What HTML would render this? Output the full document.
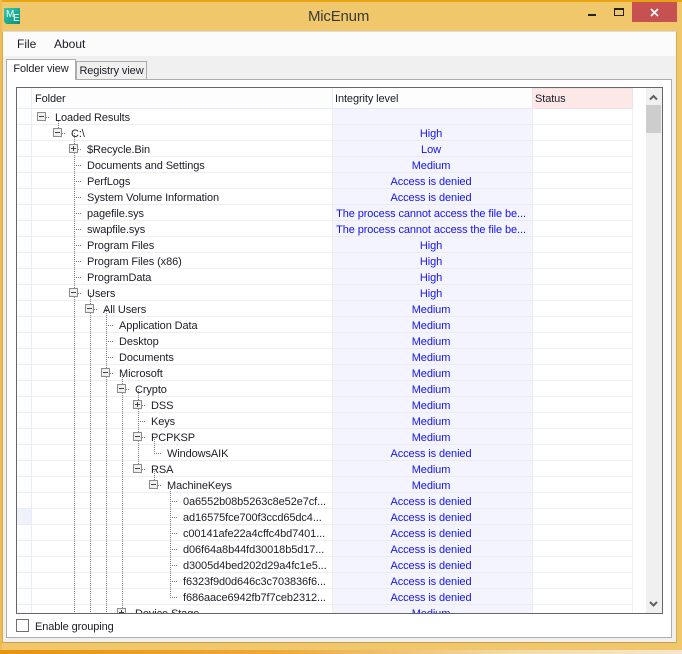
<!DOCTYPE html>
<html><head><meta charset="utf-8"><style>
html,body{margin:0;padding:0}
body{width:682px;height:654px;overflow:hidden;position:relative;background:#f0c76b;font:11px/16px "Liberation Sans",sans-serif;letter-spacing:-.1px;color:#1c1c28}
div,span{position:absolute;box-sizing:border-box;white-space:nowrap}
.r{left:0;width:630px;height:16px;position:relative;display:block}
#rows{left:0;top:21px;width:645px;height:504px;overflow:hidden}
#rows .r{position:absolute}
.h{left:0;top:0;width:15px;height:16px;border-right:1px solid #e6edf8;border-bottom:1px solid #e6edf8;background:#fdfdff}
.f{left:15px;top:0;width:301px;height:16px;border-right:1px solid #efefef;border-bottom:1px solid #efefef}
.i{left:316px;top:0;width:200px;height:16px;background:#f4f4ff;border-right:1px solid #ebebf5;border-bottom:1px solid #ebebf5;color:#1414f0;text-align:center;line-height:18px;padding-right:3px}
.s{left:516px;top:0;width:100px;height:16px;border-right:1px solid #efefef;border-bottom:1px solid #efefef}
.t{top:1px;line-height:16px}
</style></head><body>
<div style="left:0;top:0;width:682px;height:2px;background:#e8a312"></div>
<div style="left:0;top:0;width:2px;height:654px;background:#eebb55"></div>
<div style="left:0;top:650px;width:682px;height:4px;background:linear-gradient(90deg,#e8930c,#eca93a 40%,#f3d9a8 75%,#f6e6cc)"></div>
<div style="left:4px;top:8px;width:16px;height:16px;background:linear-gradient(135deg,#35c9a8,#0a8f7c);clip-path:polygon(0 0,100% 0,100% 100%,15% 100%,0 85%)">
 <span style="left:2px;top:2px;color:#e8fff8;font-size:10px;line-height:10px;letter-spacing:0">M</span>
 <span style="left:9px;top:6px;color:#fff;font-size:10px;line-height:10px;letter-spacing:0">E</span>
</div>
<div style="left:308px;top:8px;font-size:15px;line-height:18px;letter-spacing:-.2px;color:#3a3a3a">MicEnum</div>
<div style="left:588px;top:14px;width:8px;height:2px;background:#222"></div>
<div style="left:614px;top:8px;width:10px;height:8px;border:1px solid #222;border-top-width:2px"></div>
<div style="left:632px;top:2px;width:45px;height:20px;background:#c75050"></div>
<svg style="position:absolute;left:650px;top:8px" width="9" height="9"><path d="M1 1L8 8M8 1L1 8" stroke="#fff" stroke-width="1.7"/></svg>

<div style="left:2px;top:31px;width:675px;height:612px;background:#f0f0f0;border-right:1px solid #d8ad4a;border-bottom:1px solid #c9a04a;border-top:1px solid #ddd;border-left:1px solid #d8ad4a"></div>
<div style="left:3px;top:32px;width:673px;height:24px;background:#fbfbfb"></div>
<div style="left:17px;top:36px;font-size:12px;letter-spacing:0">File</div>
<div style="left:54px;top:36px;font-size:12px;letter-spacing:0">About</div>

<div style="left:76px;top:61px;width:71px;height:19px;background:#f0f0f0;border:1px solid #adadad;text-align:center;line-height:19px">Registry view</div>
<div style="left:6px;top:79px;width:666px;height:559px;background:#fff;border:1px solid #adadad"></div>
<div style="left:6px;top:59px;width:70px;height:21px;background:#fff;border:1px solid #adadad;border-bottom:0;text-align:center;line-height:19px">Folder view</div>

<div style="left:16px;top:87px;width:647px;height:527px;border:1px solid #666;overflow:hidden;background:#fff">
 <div style="left:0;top:0;width:15px;height:21px;background:#fdfdff;border-right:1px solid #e6edf8;border-bottom:1px solid #e6edf8"></div>
 <div style="left:15px;top:0;width:301px;height:21px;background:#fdfdfd;border-right:1px solid #e6edf8;border-bottom:1px solid #e6edf8;padding-left:3px;line-height:23px">Folder</div>
 <div style="left:316px;top:0;width:200px;height:21px;background:#fdfdfd;border-right:1px solid #f0e0e2;border-bottom:1px solid #e6e6f8;padding-left:2px;line-height:23px">Integrity level</div>
 <div style="left:515px;top:0;width:101px;height:21px;background:#fde8e8;border:1px solid #f5dfe5;padding-left:2px;line-height:21px">Status</div>
 <div id="rows">
<div class="r" style="top:0"><div class="h"></div><div class="f"><span class="t" style="left:23px">Loaded Results</span></div><div class="i"></div><div class="s"></div></div>
<div class="r" style="top:16px"><div class="h"></div><div class="f"><span class="t" style="left:39px">C:\</span></div><div class="i">High</div><div class="s"></div></div>
<div class="r" style="top:32px"><div class="h"></div><div class="f"><span class="t" style="left:55px">$Recycle.Bin</span></div><div class="i">Low</div><div class="s"></div></div>
<div class="r" style="top:48px"><div class="h"></div><div class="f"><span class="t" style="left:55px">Documents and Settings</span></div><div class="i">Medium</div><div class="s"></div></div>
<div class="r" style="top:64px"><div class="h"></div><div class="f"><span class="t" style="left:55px">PerfLogs</span></div><div class="i">Access is denied</div><div class="s"></div></div>
<div class="r" style="top:80px"><div class="h"></div><div class="f"><span class="t" style="left:55px">System Volume Information</span></div><div class="i">Access is denied</div><div class="s"></div></div>
<div class="r" style="top:96px"><div class="h"></div><div class="f"><span class="t" style="left:55px">pagefile.sys</span></div><div class="i">The process cannot access the file be...</div><div class="s"></div></div>
<div class="r" style="top:112px"><div class="h"></div><div class="f"><span class="t" style="left:55px">swapfile.sys</span></div><div class="i">The process cannot access the file be...</div><div class="s"></div></div>
<div class="r" style="top:128px"><div class="h"></div><div class="f"><span class="t" style="left:55px">Program Files</span></div><div class="i">High</div><div class="s"></div></div>
<div class="r" style="top:144px"><div class="h"></div><div class="f"><span class="t" style="left:55px">Program Files (x86)</span></div><div class="i">High</div><div class="s"></div></div>
<div class="r" style="top:160px"><div class="h"></div><div class="f"><span class="t" style="left:55px">ProgramData</span></div><div class="i">High</div><div class="s"></div></div>
<div class="r" style="top:176px"><div class="h"></div><div class="f"><span class="t" style="left:55px">Users</span></div><div class="i">High</div><div class="s"></div></div>
<div class="r" style="top:192px"><div class="h"></div><div class="f"><span class="t" style="left:71px">All Users</span></div><div class="i">Medium</div><div class="s"></div></div>
<div class="r" style="top:208px"><div class="h"></div><div class="f"><span class="t" style="left:87px">Application Data</span></div><div class="i">Medium</div><div class="s"></div></div>
<div class="r" style="top:224px"><div class="h"></div><div class="f"><span class="t" style="left:87px">Desktop</span></div><div class="i">Medium</div><div class="s"></div></div>
<div class="r" style="top:240px"><div class="h"></div><div class="f"><span class="t" style="left:87px">Documents</span></div><div class="i">Medium</div><div class="s"></div></div>
<div class="r" style="top:256px"><div class="h"></div><div class="f"><span class="t" style="left:87px">Microsoft</span></div><div class="i">Medium</div><div class="s"></div></div>
<div class="r" style="top:272px"><div class="h"></div><div class="f"><span class="t" style="left:103px">Crypto</span></div><div class="i">Medium</div><div class="s"></div></div>
<div class="r" style="top:288px"><div class="h"></div><div class="f"><span class="t" style="left:119px">DSS</span></div><div class="i">Medium</div><div class="s"></div></div>
<div class="r" style="top:304px"><div class="h"></div><div class="f"><span class="t" style="left:119px">Keys</span></div><div class="i">Medium</div><div class="s"></div></div>
<div class="r" style="top:320px"><div class="h"></div><div class="f"><span class="t" style="left:119px">PCPKSP</span></div><div class="i">Medium</div><div class="s"></div></div>
<div class="r" style="top:336px"><div class="h"></div><div class="f"><span class="t" style="left:135px">WindowsAIK</span></div><div class="i">Access is denied</div><div class="s"></div></div>
<div class="r" style="top:352px"><div class="h"></div><div class="f"><span class="t" style="left:119px">RSA</span></div><div class="i">Medium</div><div class="s"></div></div>
<div class="r" style="top:368px"><div class="h"></div><div class="f"><span class="t" style="left:135px">MachineKeys</span></div><div class="i">Medium</div><div class="s"></div></div>
<div class="r" style="top:384px"><div class="h"></div><div class="f"><span class="t" style="left:151px">0a6552b08b5263c8e52e7cf...</span></div><div class="i">Access is denied</div><div class="s"></div></div>
<div class="r" style="top:400px"><div class="h" style="background:#eef2f9"></div><div class="f"><span class="t" style="left:151px">ad16575fce700f3ccd65dc4...</span></div><div class="i">Access is denied</div><div class="s"></div></div>
<div class="r" style="top:416px"><div class="h"></div><div class="f"><span class="t" style="left:151px">c00141afe22a4cffc4bd7401...</span></div><div class="i">Access is denied</div><div class="s"></div></div>
<div class="r" style="top:432px"><div class="h"></div><div class="f"><span class="t" style="left:151px">d06f64a8b44fd30018b5d17...</span></div><div class="i">Access is denied</div><div class="s"></div></div>
<div class="r" style="top:448px"><div class="h"></div><div class="f"><span class="t" style="left:151px">d3005d4bed202d29a4fc1e5...</span></div><div class="i">Access is denied</div><div class="s"></div></div>
<div class="r" style="top:464px"><div class="h"></div><div class="f"><span class="t" style="left:151px">f6323f9d0d646c3c703836f6...</span></div><div class="i">Access is denied</div><div class="s"></div></div>
<div class="r" style="top:480px"><div class="h"></div><div class="f"><span class="t" style="left:151px">f686aace6942fb7f7ceb2312...</span></div><div class="i">Access is denied</div><div class="s"></div></div>
<div class="r" style="top:496px"><div class="h"></div><div class="f"><span class="t" style="left:103px">Device Stage</span></div><div class="i">Medium</div><div class="s"></div></div>
 </div>
 <!-- tree lines: svg origin at (17,88) in page coords -->
 <svg style="position:absolute;left:0;top:0" width="629" height="525" viewBox="17 88 629 525">
  <g fill="none" stroke="#7d7d7d" stroke-dasharray="1 1" shape-rendering="crispEdges">
   <path d="M46 117.5H50M62 133.5H66M58.5 121V129"/>
   <path d="M74.5 133V613M78 149.5H82M74 165.5H82M74 181.5H82M74 197.5H82M74 213.5H82M74 229.5H82M74 245.5H82M74 261.5H82M74 277.5H82M78 293.5H82"/>
   <path d="M90.5 293V613M94 309.5H98M106.5 309V613M106 325.5H114M106 341.5H114M106 357.5H114M110 373.5H114"/>
   <path d="M122.5 373V613M126 389.5H130M138.5 389V469M142 405.5H146M138 421.5H146M142 437.5H146M142 469.5H146"/>
   <path d="M154.5 437V453M154 453.5H162M154.5 469V485M158 485.5H162"/>
   <path d="M170.5 485V597M170 501.5H178M170 517.5H178M170 533.5H178M170 549.5H178M170 565.5H178M170 581.5H178M170 597.5H178M126 613.5H130"/>
  </g>
  <g fill="#efefef" stroke="#8c8c8c" shape-rendering="crispEdges">
   <rect x="37.5" y="112.5" width="8" height="8"/><rect x="53.5" y="128.5" width="8" height="8"/>
   <rect x="69.5" y="144.5" width="8" height="8"/><rect x="69.5" y="288.5" width="8" height="8"/>
   <rect x="85.5" y="304.5" width="8" height="8"/><rect x="101.5" y="368.5" width="8" height="8"/>
   <rect x="117.5" y="384.5" width="8" height="8"/><rect x="133.5" y="400.5" width="8" height="8"/>
   <rect x="133.5" y="432.5" width="8" height="8"/><rect x="133.5" y="464.5" width="8" height="8"/>
   <rect x="149.5" y="480.5" width="8" height="8"/><rect x="117.5" y="608.5" width="8" height="8"/>
  </g>
  <path stroke="#444" fill="none" shape-rendering="crispEdges" d="M39 116.5h5M55 132.5h5M71 148.5h5M73.5 146v5M71 292.5h5M87 308.5h5M103 372.5h5M119 388.5h5M135 404.5h5M137.5 402v5M135 436.5h5M135 468.5h5M151 484.5h5M119 612.5h5M121.5 610v5"/>
 </svg>
 <div style="left:629px;top:0;width:16px;height:525px;background:#f0f0f0"></div>
 <div style="left:629px;top:17px;width:15px;height:28px;background:#cdcdcd"></div>
 <svg style="position:absolute;left:629px;top:0" width="16" height="525">
  <path d="M4 11.5L7.5 8L11 11.5" fill="none" stroke="#606060" stroke-width="2"/>
  <path d="M4 514L7.5 517.5L11 514" fill="none" stroke="#606060" stroke-width="2"/>
 </svg>
</div>

<div style="left:16px;top:619px;width:13px;height:13px;border:1px solid #707070;background:#fff"></div>
<div style="left:35px;top:619px">Enable grouping</div>
</body></html>
